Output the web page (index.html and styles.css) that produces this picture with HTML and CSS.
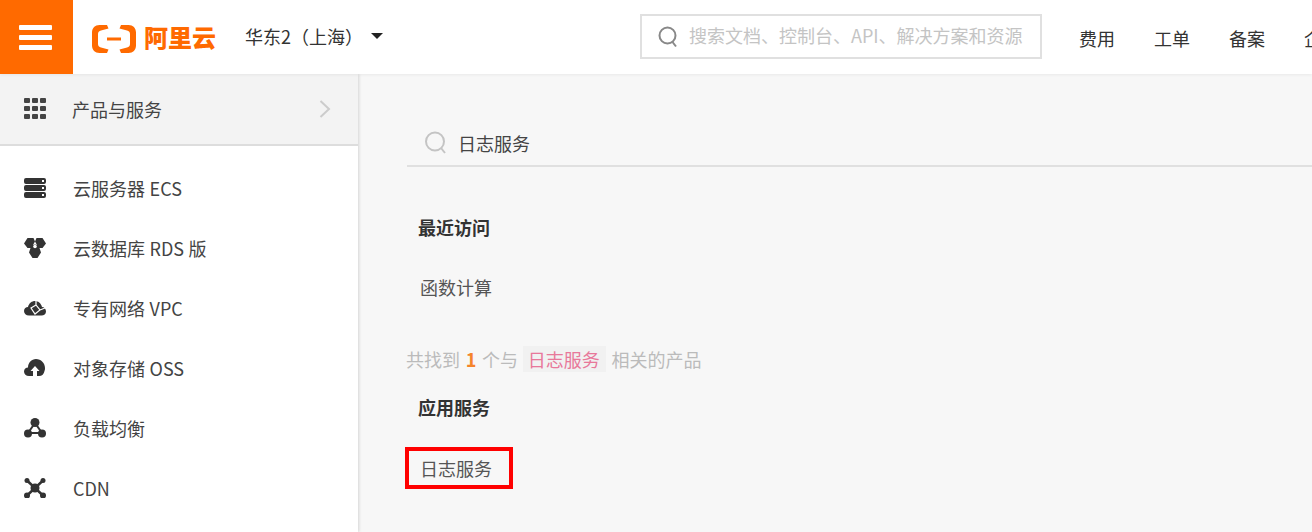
FILE: index.html
```html
<!DOCTYPE html>
<html lang="zh-CN">
<head>
<meta charset="utf-8">
<title>阿里云控制台</title>
<link rel="stylesheet" href="styles.css">
</head>
<body>
<header class="topbar">
  <button class="burger" aria-label="菜单"><i></i><i></i><i></i></button>
  <div class="logo">
    <svg class="logo-mark" width="44" height="28" viewBox="0 0 44 28"><path fill="#ff6a00" d="M15 0H7.500C3 0 0 3 0 7.500V20.500C0 25 3 28 7.500 28H15L16.500 24.500 9 22.500C7 22 6 20.800 6 19V9C6 7.200 7 6 9 5.500L16.500 3.500ZM29 0H36.500C41 0 44 3 44 7.500V20.500C44 25 41 28 36.500 28H29L27.500 24.500 35 22.500C37 22 38 20.800 38 19V9C38 7.200 37 6 35 5.500L27.500 3.500ZM15 12.500H29V15.500H15Z"/></svg>
    <span class="logo-text">阿里云</span>
  </div>
  <div class="region"><span>华东2（上海）</span><b class="caret"></b></div>
  <div class="top-search">
    <svg width="22" height="24" viewBox="0 0 22 24"><circle cx="10.500" cy="10.500" r="8" fill="none" stroke="#888" stroke-width="2"/><path d="M15.500 17L19 21.500" stroke="#888" stroke-width="2" fill="none"/></svg>
    <span>搜索文档、控制台、API、解决方案和资源</span>
  </div>
  <nav class="top-nav"><a>费用</a><a>工单</a><a>备案</a><a>企业</a></nav>
</header>
<div class="body">
  <aside class="side">
    <div class="side-head">
      <svg class="ico" width="22" height="22" viewBox="0 0 22 22" fill="#444"><rect width="6" height="5" rx="1"/><rect x="8" width="6" height="5" rx="1"/><rect x="16" width="6" height="5" rx="1"/><rect y="8" width="6" height="5" rx="1"/><rect x="8" y="8" width="6" height="5" rx="1"/><rect x="16" y="8" width="6" height="5" rx="1"/><rect y="16" width="6" height="5" rx="1"/><rect x="8" y="16" width="6" height="5" rx="1"/><rect x="16" y="16" width="6" height="5" rx="1"/></svg>
      <span class="side-label">产品与服务</span>
      <svg class="chev" width="12" height="18" viewBox="0 0 12 18"><path d="M1.500 1L10 9L1.500 17" fill="none" stroke="#ccc" stroke-width="2"/></svg>
    </div>
    <ul class="side-list">
      <li><svg class="ico" width="22" height="20" viewBox="0 0 22 20" fill="#333"><path fill-rule="evenodd" d="M2 0H20Q22 0 22 2V4Q22 6 20 6H2Q0 6 0 4V2Q0 0 2 0ZM18 2V4H20V2ZM2 7H20Q22 7 22 9V11Q22 13 20 13H2Q0 13 0 11V9Q0 7 2 7ZM18 9V11H20V9ZM2 14H20Q22 14 22 16V18Q22 20 20 20H2Q0 20 0 18V16Q0 14 2 14ZM18 16V18H20V16Z"/></svg><span>云服务器 ECS</span></li>
      <li><svg class="ico" width="22" height="20" viewBox="0 0 22 20"><path fill="#333" d="M3.500 0H9.500L11 3.500 9 7 11 6.500 13 7 11 3.500 12.500 0H18.500L22 5.500 18.500 10H15.500L17 14.500 13.500 20H8.500L5 14.500 6.500 10H3.500L0 5.500Z"/><circle cx="11" cy="8.500" r="1.800" fill="#fff"/></svg><span>云数据库 RDS 版</span></li>
      <li><svg class="ico" width="22" height="18" viewBox="0 0 22 18"><path fill="#333" d="M5 16.500C2 16.500 0 14.500 0 12C0 9.500 2 8 4 8C5 4 8 2 11 2C14 2 17 4 18 8C20 8 22 10 22 12.500C22 15 20 16.500 17.500 16.500Z"/><path stroke="#fff" stroke-width="1.200" fill="none" d="M7 9L12 6L16 11L11 15ZM12 6V2M16 11L21 9"/></svg><span>专有网络 VPC</span></li>
      <li><svg class="ico" width="22" height="20" viewBox="0 0 22 20"><path fill="#333" d="M5 18C2 18 0 16 0 13.500C0 11 2 9.500 4 9.500C4 5 7.500 1 12 1C17 1 21 5 21 10C21 11 21 12 20.500 13C20 16 18 18 15 18Z"/><path fill="#fff" d="M11 8L15.500 13H13V18H9V13H6.500Z"/></svg><span>对象存储 OSS</span></li>
      <li><svg class="ico" width="22" height="20" viewBox="0 0 22 20"><path stroke="#333" stroke-width="2" fill="none" d="M11 5L4 15H18Z"/><circle cx="11" cy="4.500" r="4.500" fill="#333"/><circle cx="4" cy="15.500" r="4" fill="#333"/><circle cx="18" cy="15.500" r="4" fill="#333"/></svg><span>负载均衡</span></li>
      <li><svg class="ico" width="22" height="20" viewBox="0 0 22 20"><path stroke="#333" stroke-width="2.500" fill="none" d="M3 2.500L19 17.500M19 2.500L3 17.500"/><circle cx="11" cy="10" r="4.500" fill="#333"/><circle cx="3" cy="2.500" r="2.500" fill="#333"/><circle cx="19" cy="2.500" r="2.500" fill="#333"/><circle cx="3" cy="17.500" r="3" fill="#333"/><circle cx="19" cy="17.500" r="3" fill="#333"/></svg><span>CDN</span></li>
    </ul>
  </aside>
  <main class="main">
    <div class="prod-search">
      <svg width="24" height="24" viewBox="0 0 24 24"><circle cx="11" cy="10.500" r="9" fill="none" stroke="#c4c4c4" stroke-width="2"/><path d="M17 17L21 22" stroke="#c4c4c4" stroke-width="2" fill="none"/></svg>
      <span>日志服务</span>
    </div>
    <h3 class="group-title recent">最近访问</h3>
    <div class="group-item">函数计算</div>
    <p class="result">共找到 <em>1</em> 个与 <mark>日志服务</mark> 相关的产品</p>
    <h3 class="group-title">应用服务</h3>
    <div class="group-item hit">日志服务</div>
  </main>
</div>
</body>
</html>
```
FILE: styles.css
```css
* { box-sizing: border-box; }
html, body { margin: 0; height: 100%; overflow: hidden; }
body {
  font-family: "Noto Sans CJK SC", "Liberation Sans", sans-serif;
  font-size: 18px;
  color: #333;
  background: #f7f7f7;
  width: 1312px;
  height: 532px;
}
.topbar {
  position: relative;
  z-index: 2;
  height: 74px;
  background: #fff;
  display: flex;
  align-items: center;
  white-space: nowrap;
  box-shadow: 0 1px 3px rgba(0,0,0,.06);
  overflow: hidden;
}
.burger {
  width: 73px;
  height: 74px;
  flex: none;
  border: 0;
  padding: 0 2px 0 0;
  background: #ff6a00;
  display: flex;
  flex-direction: column;
  align-items: center;
  justify-content: center;
  gap: 5px;
}
.burger i { display: block; width: 33px; height: 5px; background: #fff; border-radius: 1px; }
.logo { display: flex; align-items: center; margin-left: 19px; width: 153px; flex: none; }
.logo-mark { flex: none; margin-top: 3px; }
.logo-text { margin-left: 8px; font-size: 24px; font-weight: 900; line-height: 30px; color: #ff6a00; }
.region { display: flex; align-items: center; flex: none; width: 395px; font-size: 18px; color: #333; line-height: 24px; margin-top: -3px; word-spacing: 1px; }
.caret { margin-left: 8px; width: 0; height: 0; border: 6.500px solid transparent; border-top: 6.500px solid #222; border-bottom: 0; margin-top: 1px; }
.top-search {
  width: 402px;
  height: 45px;
  margin-top: -1px;
  flex: none;
  border: 2px solid #e0e0e0;
  display: flex;
  align-items: center;
  padding-left: 15px;
  gap: 10px;
  color: #c4c4c4;
  font-size: 18px;
}
.top-search span { margin-top: -3px; }
.top-search svg { flex: none; }
.top-nav { display: flex; gap: 39px; margin-left: 37px; flex: none; margin-top: 1px; }
.top-nav a { color: #333; }
.body { display: flex; height: 458px; }
.side {
  width: 358px;
  flex: none;
  background: #fff;
  box-shadow: 1px 0 3px rgba(0,0,0,.14);
}
.side-head {
  height: 72px;
  background: #f3f3f3;
  border-bottom: 2px solid #ddd;
  display: flex;
  align-items: center;
  padding-left: 24px;
  color: #444;
}
.side-label { margin-left: 26px; }
.chev { margin-left: auto; margin-right: 27px; }
.side-list { list-style: none; margin: 12px 0 0; padding: 0; }
.side-list li { height: 60px; display: flex; align-items: center; padding-left: 24px; color: #444; }
.side-list .ico { flex: none; margin-right: 27px; }
.side-list span { line-height: 24px; word-spacing: .5px; }
.main { flex: 1; padding: 50px 0 0 49px; min-width: 0; }
.prod-search {
  height: 43px;
  border-bottom: 2px solid #e0e0e0;
  display: flex;
  align-items: center;
  padding: 0 0 3px 17px;
  gap: 10px;
  color: #444;
}
.group-title { margin: 0 0 0 11px; font-size: 18px; font-weight: 700; line-height: 24px; color: #333; }
.recent { margin-top: 48px; }
.group-item { margin: 36px 0 0 13px; line-height: 24px; color: #555; }
.result { margin: 48px 0 0 -1px; line-height: 24px; color: #bbb; word-spacing: 1.670px; }
.result em { font-style: normal; font-weight: 700; color: #f5842b; }
.result mark { background: #f1f1f1; color: #e8789a; padding: 0 6px 0 5px; margin-left: -1px; }
.result + .group-title { margin-top: 24px; }
.hit {
  width: 108px;
  height: 42px;
  margin: 28px 0 0 -2px;
  padding-left: 11px;
  border: 4px solid #f00;
  line-height: 34px;
}
```
